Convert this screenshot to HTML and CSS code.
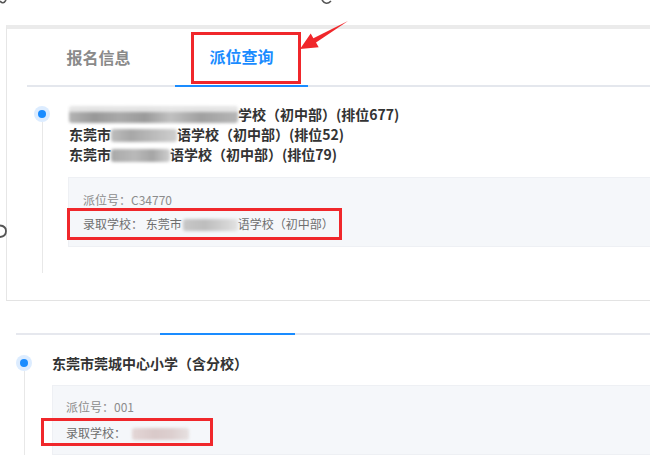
FILE: index.html
```html
<!DOCTYPE html>
<html lang="zh-CN">
<head>
<meta charset="utf-8">
<title>派位查询</title>
<link rel="stylesheet" href="styles.css">
</head>
<body>
<div class="topgap"></div>
<section class="panel">
  <nav class="tabs">
    <div class="tab">报名信息</div>
    <div class="tab active">派位查询<span class="hl hl-tab"></span></div>
  </nav>
  <div class="tl tl-1">
    <div class="axis"><span class="dot"></span><span class="rail"></span></div>
    <div class="tl-body">
      <div class="titles">
        <div class="t"><span class="blur b1"></span>学校（初中部）(排位677)</div>
        <div class="t">东莞市<span class="blur b2"></span>语学校（初中部）(排位52)</div>
        <div class="t">东莞市<span class="blur b3"></span>语学校（初中部）(排位79)</div>
      </div>
      <div class="card card-1">
        <div class="row no">派位号：C34770</div>
        <div class="row school"><span class="mark">录取学校： 东莞市<span class="blur b4"></span>语学校（初中部）<span class="hl hl-r1"></span></span></div>
      </div>
    </div>
  </div>
</section>
<section class="second">
  <div class="inkbar"><span class="ink"></span></div>
  <div class="tl tl-2">
    <div class="axis"><span class="dot"></span><span class="rail"></span></div>
    <div class="tl-body">
      <div class="titles">
        <div class="t">东莞市莞城中心小学（含分校）</div>
      </div>
      <div class="card card-2">
        <div class="row no">派位号：001</div>
        <div class="row school"><span class="mark">录取学校：<span class="blur b5"></span><span class="hl hl-r2"></span></span></div>
      </div>
    </div>
  </div>
</section>
<svg class="overlay" width="650" height="460" viewBox="0 0 650 460" aria-hidden="true">
  <path d="M0,1 Q3,5 6,0" fill="none" stroke="#555" stroke-width="1.6"/>
  <path d="M322,0 Q326,6 331,1" fill="none" stroke="#555" stroke-width="1.6"/>
  <path d="M0,225.5 Q6,226 6,231 Q6,236.5 0,237" fill="none" stroke="#555" stroke-width="1.8"/>
  <polygon points="300,49 310.7,33.5 313.4,38.2 348,21 316,42.6 318.7,47.3" fill="#f0272b"/>
</svg>
</body>
</html>
```
FILE: styles.css
```css
* { box-sizing: border-box; margin: 0; padding: 0; }
html, body { background: #fff; overflow: hidden; }
body {
  width: 650px;
  height: 460px;
  position: relative;
  font-family: "Noto Sans CJK SC", "Microsoft YaHei", sans-serif;
  color: #333;
}
.topgap { height: 25px; }
.panel {
  height: 276px;
  margin-left: 6px;
  border-top: 4px solid #ebebeb;
  border-left: 1px solid #e6e6e6;
  border-bottom: 1px solid #e3e3e3;
}
.tabs {
  display: flex;
  gap: 10px;
  height: 58px;
  margin-left: 20px;
  padding-left: 5px;
  border-bottom: 2px solid #e4e7ed;
}
.tab {
  width: 133px;
  height: 56px;
  display: flex;
  align-items: center;
  justify-content: center;
  font-size: 16px;
  font-weight: 700;
  color: #8a8a8a;
  position: relative;
}
.tab.active {
  color: #1a8cff;
  height: 58px;
  padding-bottom: 2px;
  border-bottom: 2px solid #1a8cff;
}
.hl { position: absolute; border: 3px solid #f0272b; display: block; }
.hl-tab { left: 16px; top: 3px; width: 110px; height: 52px; }

.tl { display: flex; }
.tl-1 { margin-top: 17px; margin-left: 27px; gap: 18px; }
.tl-2 { margin-top: 18px; gap: 20px; }
.axis { width: 16px; flex: none; display: flex; flex-direction: column; align-items: center; }
.dot {
  width: 8px; height: 8px; margin-top: 6px;
  border-radius: 50%;
  background: #1a8cff;
  box-shadow: 0 0 0 4px #dcecff;
}
.rail { width: 1px; flex: 1; margin-top: 4px; background: #e8e8e8; }
.tl-body { flex: 1; min-width: 0; }
.tl-1 .tl-body { padding-bottom: 26px; }
.t {
  font-size: 14px;
  font-weight: 700;
  line-height: 20px;
  white-space: nowrap;
  color: #333;
}
.tl-1 .t { padding-left: 1px; }
.card {
  background: #f5f7fa;
  border: 1px solid #eef0f4;
  border-right: none;
  display: flex;
  flex-direction: column;
}
.card-1 { margin-top: 13px; padding: 12px 14px; gap: 4px; }
.card-2 { margin-top: 12px; padding: 11px 13px; gap: 6px; }
.row { font-size: 12px; line-height: 20px; white-space: nowrap; }
.row.no { color: #8c8c8c; }
.row.school { color: #6e6e6e; }
.mark { position: relative; display: inline-block; }
.hl-r1 { left: -16px; top: -6px; width: 275px; height: 32px; }
.hl-r2 { left: -25px; top: -5px; width: 172px; height: 28px; }

.blur {
  display: inline-block;
  vertical-align: -2px;
  height: 13px;
  border-radius: 3px;
  filter: blur(1.4px);
  background: linear-gradient(90deg, #c9c9c9, #a6a6a6 18%, #bababa 36%, #9c9c9c 55%, #b5b5b5 75%, #d2d2d2);
}
.b1 {
  width: 169px; height: 17px; vertical-align: -3px;
  background:
    linear-gradient(180deg, rgba(235,235,235,0.9) 0 35%, transparent 35%),
    linear-gradient(90deg, #b4b4b4, #989898 15%, #a9a9a9 30%, #9a9a9a 45%, #c0c0c0 60%, #a0a0a0 78%, #b6b6b6);
}
.b2 { width: 66px; background: linear-gradient(90deg, #bdbdbd, #a7a7a7 30%, #b8b8b8 60%, #cfcfcf); }
.b3 { width: 59px; background: linear-gradient(90deg, #a9a9a9, #b9b9b9 40%, #a5a5a5 70%, #cfcfcf); }
.b4 { width: 55px; height: 12px; margin-left: 1px; background: linear-gradient(90deg, #c7c7c7, #bdbdbd 40%, #d4d4d4 80%, #e3e3e3); }
.b5 { width: 57px; height: 12px; margin-left: 6px; background: linear-gradient(90deg, #e3d6d6, #d9c9c9 40%, #dccfcf 70%, #e6e0e0); }

.second { margin-left: 16px; }
.inkbar { margin-top: 32px; height: 2px; background: #e6e8ee; }
.ink { display: block; width: 135px; height: 2px; margin-left: 144px; background: #1a8cff; }

.overlay { position: absolute; left: 0; top: 0; pointer-events: none; }
```
